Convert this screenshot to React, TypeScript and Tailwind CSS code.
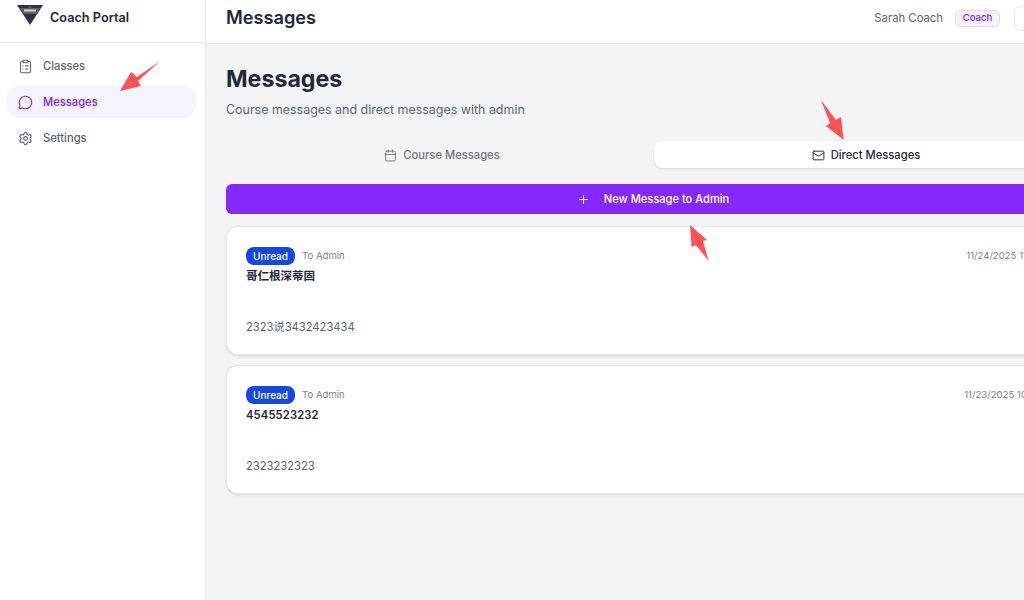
import React from "react";
import { ClipboardList, MessageCircle, Settings, Calendar, Mail, Plus } from "lucide-react";

function NavItem({ icon, label, active }: { icon: React.ReactNode; label: string; active?: boolean }) {
  return (
    <div className={active ? "flex items-center gap-[10px] h-[32px] px-[11px] rounded-xl bg-violet-50 text-[#7f22fe] text-[11.2px] font-medium" : "flex items-center gap-[10px] h-[32px] px-[11px] rounded-xl text-[#5a6474] text-[11.2px] font-medium"}>
      {icon}
      <span>{label}</span>
    </div>
  );
}

function Card({ title, body, date, cjk }: { title: string; body: string; date: string; cjk?: boolean }) {
  return (
    <div className="h-[129px] bg-white rounded-xl border border-gray-200 shadow-sm pl-[19px] pr-[22px] pt-[20px] shrink-0">
      <div className="flex items-start justify-between">
        <div className="flex items-center gap-[7px] h-[18px]">
          <span className="h-[18px] w-[49px] flex items-center justify-center rounded-lg bg-[#1447e6] text-white text-[10px] font-medium">Unread</span>
          <span className="text-[9.6px] text-[#7a8290]">To Admin</span>
        </div>
        <span className="text-[9.6px] text-[#7a8290] whitespace-nowrap leading-[18px]">{date}</span>
      </div>
      <div className={cjk ? "mt-[2px] text-[11.5px] leading-[18px] font-semibold text-[#1e2939]" : "mt-[2px] text-[11.2px] leading-[18px] font-semibold tracking-[0.15px] text-[#1e2939]"}>{title}</div>
      <div className="mt-[33px] text-[11.2px] leading-[18px] text-[#5a6474]">{body}</div>
    </div>
  );
}

export default function App() {
  return (
    <div className="relative w-[1024px] h-[600px] overflow-hidden flex bg-[#f3f4f6]" style={{ fontFamily: "Inter, 'Noto Sans CJK SC', sans-serif" }}>
      <aside className="w-[206px] shrink-0 h-full bg-white border-r border-gray-200 flex flex-col">
        <div className="h-[43px] border-b border-gray-200 flex items-center pl-[17px] pb-[7px] gap-[7px] shrink-0">
          <svg width="26" height="22" viewBox="0 0 26 22" className="-mt-[4px]">
            <polygon points="0,0 26,0 13,20" fill="#2b3442" />
            <polygon points="3,3 23,3 19.5,9 6.5,9" fill="#59606a" />
            <rect x="7" y="4.5" width="12" height="2" fill="#d6d8da" />
            <rect x="11.5" y="1.5" width="3" height="2" fill="#8f4a4a" />
          </svg>
          <span className="text-[12.7px] font-semibold text-[#1e2939]">Coach Portal</span>
        </div>
        <nav className="flex flex-col gap-[4px] pl-[7px] pr-[9px] pt-[7px]">
          <NavItem icon={<ClipboardList size={15} strokeWidth={1.75} />} label="Classes" />
          <NavItem active icon={<MessageCircle size={15} strokeWidth={1.75} />} label="Messages" />
          <NavItem icon={<Settings size={15} strokeWidth={1.75} />} label="Settings" />
        </nav>
      </aside>
      <main className="w-[896px] shrink-0 h-full flex flex-col">
        <header className="h-[44px] shrink-0 bg-white border-b border-gray-200 flex items-center justify-between pl-5 pr-5 pb-[7px]">
          <h1 className="text-[18.2px] font-semibold text-[#1e2939]">Messages</h1>
          <div className="flex items-center">
            <span className="text-[11.3px] text-[#5a6474]">Sarah Coach</span>
            <span className="ml-3 h-[17px] w-[45px] flex items-center justify-center rounded-md bg-violet-50 border border-violet-200 text-[#7f22fe] text-[9.6px] font-medium">Coach</span>
            <div className="ml-[14px] h-[25px] w-[68px] rounded-md bg-white border border-gray-200" />
          </div>
        </header>
        <div className="flex flex-col px-5 pt-[20px]">
          <h2 className="text-[23.2px] leading-[30px] font-bold text-[#1e2939]">Messages</h2>
          <p className="mt-[7px] text-[12.45px] leading-[18px] text-[#5a6474]">Course messages and direct messages with admin</p>
          <div className="mt-[18px] h-[35px] rounded-xl bg-[#f4f4f5] p-1 flex">
            <div className="flex-1 flex items-center justify-center gap-[6px] pt-[1px] text-[#717680] text-[11.2px] font-medium">
              <Calendar size={13} strokeWidth={1.75} />
              <span>Course Messages</span>
            </div>
            <div className="flex-1 flex items-center justify-center gap-[6px] pt-[1px] bg-white rounded-lg shadow-sm text-[#1e2939] text-[11.2px] font-medium">
              <Mail size={13} strokeWidth={1.75} />
              <span>Direct Messages</span>
            </div>
          </div>
          <button className="mt-[12px] h-[30px] rounded-md bg-[#8629ff] text-white text-[11.1px] font-medium flex items-center justify-center gap-[14px] pr-[2px]">
            <Plus size={13} strokeWidth={2} />
            <span>New Message to Admin</span>
          </button>
          <div className="mt-[12px] flex flex-col gap-[10px]">
            <Card cjk title="哥仁根深蒂固" body="2323说3432423434" date="11/24/2025 11:23 PM" />
            <Card title="4545523232" body="2323232323" date="11/23/2025 10:23 PM" />
          </div>
        </div>
      </main>
      <svg className="absolute inset-0 pointer-events-none" width="1024" height="600" viewBox="0 0 1024 600">
        <g fill="#ff5252">
          <polygon points="160,61 137,77 131,72 120,91 141,86 138,81" />
          <polygon points="821,100 830,123 826,126 843.7,140 841,117 836,120" />
          <polygon points="708.7,261 703,241 707,240 690,225 691.7,247 696,245" />
        </g>
      </svg>
    </div>
  );
}
